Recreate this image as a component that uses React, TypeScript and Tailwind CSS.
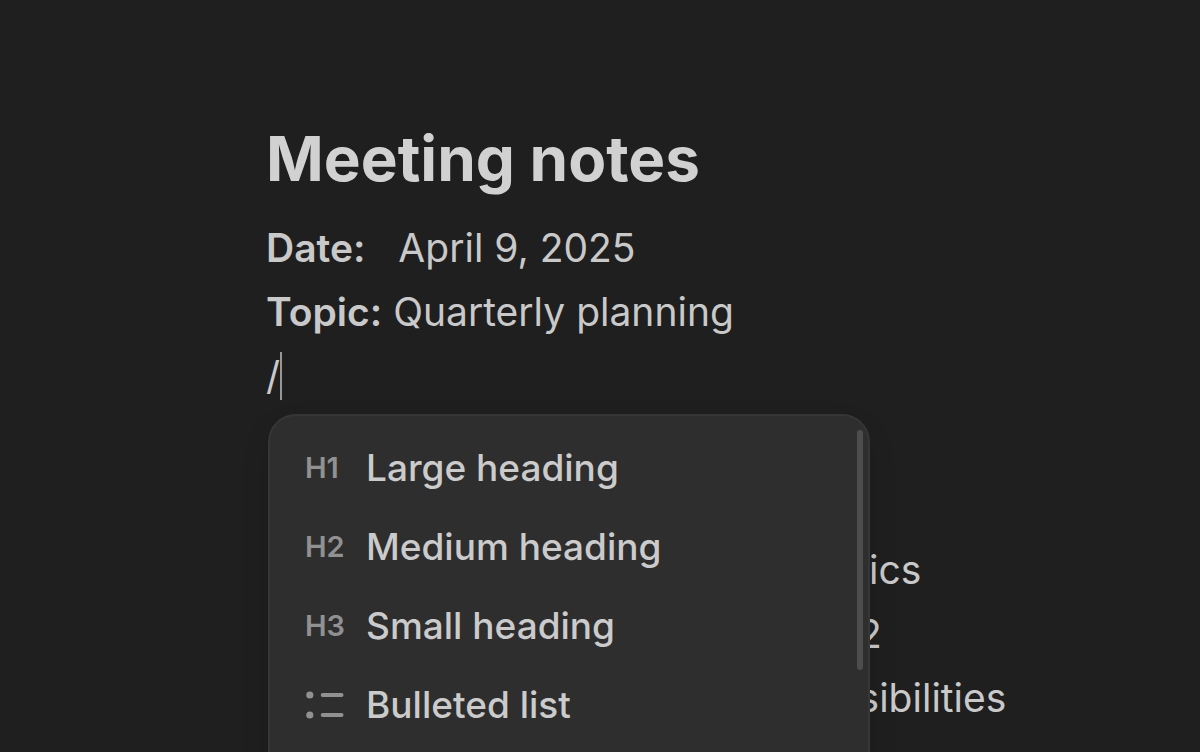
import React from "react";

const agenda = [
  "Review Q1 outcomes and metrics",
  "Plan goals and priorities for Q2",
  "Assign team roles and responsibilities",
];

function BulletedListIcon() {
  return (
    <svg viewBox="0 0 40 30" className="h-[30px] w-10" fill="none" aria-hidden="true">
      <circle cx="4.8" cy="5" r="3.6" fill="currentColor" />
      <circle cx="4.8" cy="25" r="3.6" fill="currentColor" />
      <path d="M17.6 5h19M17.6 25h19" stroke="currentColor" strokeWidth="3.8" strokeLinecap="round" />
    </svg>
  );
}

const commands: { icon: React.ReactNode; label: string }[] = [
  { icon: "H1", label: "Large heading" },
  { icon: "H2", label: "Medium heading" },
  { icon: "H3", label: "Small heading" },
  { icon: <BulletedListIcon />, label: "Bulleted list" },
];

function SlashMenu() {
  return (
    <div className="absolute top-full left-0.5 mt-1.5 flex w-[602px] rounded-[28px] border-2 border-[#363636] bg-[#2e2e2e] pr-[5px] shadow-[0_12px_28px_rgba(0,0,0,0.12)]">
      <ul role="menu" aria-label="Insert block" className="flex-1 pt-3 pb-16">
        {commands.map(({ icon, label }) => (
          <li key={label} role="none">
            <button
              type="button"
              role="menuitem"
              className="flex h-[79px] w-full items-center pl-[35px] text-left text-[37px] font-medium text-[#cbcbcb]"
            >
              <span className="flex w-[61px] items-center text-[29px] font-semibold text-[#919191]">{icon}</span>
              {label}
            </button>
          </li>
        ))}
      </ul>
      <div className="mt-3.5 h-60 w-1.5 rounded-full bg-[#4d4d4d]" />
    </div>
  );
}

export default function App() {
  return (
    <main className="h-screen overflow-hidden bg-[#1f1f1f] pt-[119px] pr-6 pl-[266px] font-['Inter',sans-serif] text-[39px] leading-[64px] text-[#c9c9c9]">
      <h1 className="mb-[17px] text-[62px] leading-[80px] font-bold text-[#d1d1d1]">Meeting notes</h1>
      <p className="whitespace-pre-wrap">
        <strong className="font-semibold">Date:</strong>
        {"   April 9, 2025"}
      </p>
      <p>
        <strong className="font-semibold">Topic:</strong> Quarterly planning
      </p>
      <div className="relative z-10">
        <p className="flex items-center">
          /<span className="h-12 w-0.5 bg-[#979797]" />
        </p>
        <SlashMenu />
      </div>
      <ul className="mt-[130px] list-disc pl-[46px] whitespace-nowrap">
        {agenda.map((item) => (
          <li key={item}>{item}</li>
        ))}
      </ul>
    </main>
  );
}
